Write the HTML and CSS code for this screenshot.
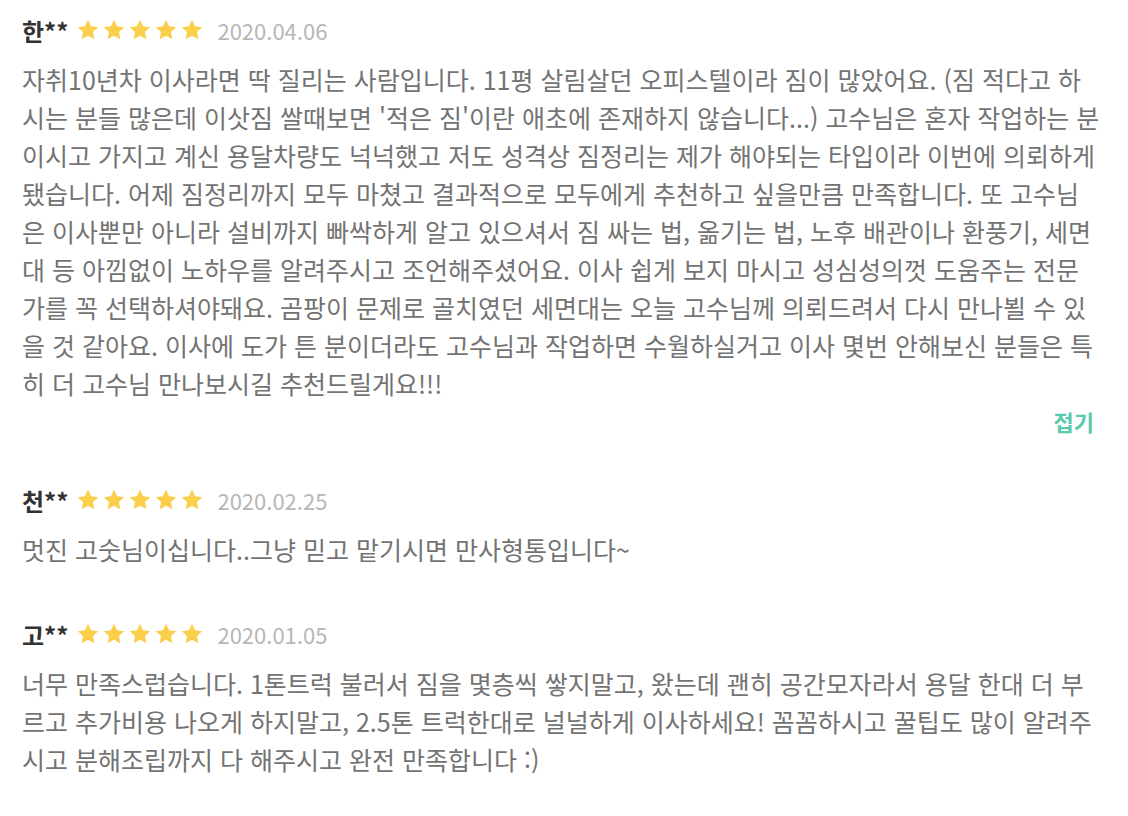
FILE: index.html
```html
<!DOCTYPE html>
<html lang="ko">
<head>
<meta charset="utf-8">
<link rel="stylesheet" href="styles.css">
</head>
<body>
<div class="reviews">
  <div class="review">
    <div class="head">
      <span class="name">한**</span>
      <span class="stars">
        <svg viewBox="0 0 24 24"><path d="M12 1.8l3.1 6.5 7.1.9-5.2 4.9 1.3 7.1L12 17.7l-6.3 3.5 1.3-7.1L1.8 9.2l7.1-.9z"/></svg>
        <svg viewBox="0 0 24 24"><path d="M12 1.8l3.1 6.5 7.1.9-5.2 4.9 1.3 7.1L12 17.7l-6.3 3.5 1.3-7.1L1.8 9.2l7.1-.9z"/></svg>
        <svg viewBox="0 0 24 24"><path d="M12 1.8l3.1 6.5 7.1.9-5.2 4.9 1.3 7.1L12 17.7l-6.3 3.5 1.3-7.1L1.8 9.2l7.1-.9z"/></svg>
        <svg viewBox="0 0 24 24"><path d="M12 1.8l3.1 6.5 7.1.9-5.2 4.9 1.3 7.1L12 17.7l-6.3 3.5 1.3-7.1L1.8 9.2l7.1-.9z"/></svg>
        <svg viewBox="0 0 24 24"><path d="M12 1.8l3.1 6.5 7.1.9-5.2 4.9 1.3 7.1L12 17.7l-6.3 3.5 1.3-7.1L1.8 9.2l7.1-.9z"/></svg>
      </span>
      <span class="date">2020.04.06</span>
    </div>
    <p class="body">자취10년차 이사라면 딱 질리는 사람입니다. 11평 살림살던 오피스텔이라 짐이 많았어요. (짐 적다고 하<br>
시는 분들 많은데 이삿짐 쌀때보면 '적은 짐'이란 애초에 존재하지 않습니다...) 고수님은 혼자 작업하는 분<br>
이시고 가지고 계신 용달차량도 넉넉했고 저도 성격상 짐정리는 제가 해야되는 타입이라 이번에 의뢰하게<br>
됐습니다. 어제 짐정리까지 모두 마쳤고 결과적으로 모두에게 추천하고 싶을만큼 만족합니다. 또 고수님<br>
은 이사뿐만 아니라 설비까지 빠싹하게 알고 있으셔서 짐 싸는 법, 옮기는 법, 노후 배관이나 환풍기, 세면<br>
대 등 아낌없이 노하우를 알려주시고 조언해주셨어요. 이사 쉽게 보지 마시고 성심성의껏 도움주는 전문<br>
가를 꼭 선택하셔야돼요. 곰팡이 문제로 골치였던 세면대는 오늘 고수님께 의뢰드려서 다시 만나뵐 수 있<br>
을 것 같아요. 이사에 도가 튼 분이더라도 고수님과 작업하면 수월하실거고 이사 몇번 안해보신 분들은 특<br>
히 더 고수님 만나보시길 추천드릴게요!!!</p>
    <div class="fold"><span class="fold-btn">접기</span></div>
  </div>
  <div class="review">
    <div class="head">
      <span class="name">천**</span>
      <span class="stars">
        <svg viewBox="0 0 24 24"><path d="M12 1.8l3.1 6.5 7.1.9-5.2 4.9 1.3 7.1L12 17.7l-6.3 3.5 1.3-7.1L1.8 9.2l7.1-.9z"/></svg>
        <svg viewBox="0 0 24 24"><path d="M12 1.8l3.1 6.5 7.1.9-5.2 4.9 1.3 7.1L12 17.7l-6.3 3.5 1.3-7.1L1.8 9.2l7.1-.9z"/></svg>
        <svg viewBox="0 0 24 24"><path d="M12 1.8l3.1 6.5 7.1.9-5.2 4.9 1.3 7.1L12 17.7l-6.3 3.5 1.3-7.1L1.8 9.2l7.1-.9z"/></svg>
        <svg viewBox="0 0 24 24"><path d="M12 1.8l3.1 6.5 7.1.9-5.2 4.9 1.3 7.1L12 17.7l-6.3 3.5 1.3-7.1L1.8 9.2l7.1-.9z"/></svg>
        <svg viewBox="0 0 24 24"><path d="M12 1.8l3.1 6.5 7.1.9-5.2 4.9 1.3 7.1L12 17.7l-6.3 3.5 1.3-7.1L1.8 9.2l7.1-.9z"/></svg>
      </span>
      <span class="date">2020.02.25</span>
    </div>
    <p class="body">멋진 고숫님이십니다..그냥 믿고 맡기시면 만사형통입니다~</p>
  </div>
  <div class="review">
    <div class="head">
      <span class="name">고**</span>
      <span class="stars">
        <svg viewBox="0 0 24 24"><path d="M12 1.8l3.1 6.5 7.1.9-5.2 4.9 1.3 7.1L12 17.7l-6.3 3.5 1.3-7.1L1.8 9.2l7.1-.9z"/></svg>
        <svg viewBox="0 0 24 24"><path d="M12 1.8l3.1 6.5 7.1.9-5.2 4.9 1.3 7.1L12 17.7l-6.3 3.5 1.3-7.1L1.8 9.2l7.1-.9z"/></svg>
        <svg viewBox="0 0 24 24"><path d="M12 1.8l3.1 6.5 7.1.9-5.2 4.9 1.3 7.1L12 17.7l-6.3 3.5 1.3-7.1L1.8 9.2l7.1-.9z"/></svg>
        <svg viewBox="0 0 24 24"><path d="M12 1.8l3.1 6.5 7.1.9-5.2 4.9 1.3 7.1L12 17.7l-6.3 3.5 1.3-7.1L1.8 9.2l7.1-.9z"/></svg>
        <svg viewBox="0 0 24 24"><path d="M12 1.8l3.1 6.5 7.1.9-5.2 4.9 1.3 7.1L12 17.7l-6.3 3.5 1.3-7.1L1.8 9.2l7.1-.9z"/></svg>
      </span>
      <span class="date">2020.01.05</span>
    </div>
    <p class="body">너무 만족스럽습니다. 1톤트럭 불러서 짐을 몇층씩 쌓지말고, 왔는데 괜히 공간모자라서 용달 한대 더 부<br>
르고 추가비용 나오게 하지말고, 2.5톤 트럭한대로 널널하게 이사하세요! 꼼꼼하시고 꿀팁도 많이 알려주<br>
시고 분해조립까지 다 해주시고 완전 만족합니다 :)</p>
  </div>
</div>
</body>
</html>
```

FILE: styles.css
```css
* { box-sizing: border-box; }
html, body { margin: 0; padding: 0; background: #fff; }
body {
  font-family: "Noto Sans CJK KR", "Noto Sans", sans-serif;
  color: #737373;
}
.reviews {
  padding: 12px 20px 0 22px;
  display: flex;
  flex-direction: column;
}
.review { margin-bottom: 48px; }
.head {
  display: flex;
  align-items: center;
  height: 36px;
}
.name {
  font-size: 24px;
  font-weight: 700;
  color: #333;
  margin-right: 8px;
}
.stars { display: flex; gap: 2px; margin-right: 13px; }
.stars svg { width: 24px; height: 24px; fill: #fbcf4c; display: block; }
.date { font-size: 22px; color: #b7b7b7; }
.body {
  margin: 12px 0 0;
  font-size: 25px;
  line-height: 38px;
  color: #737373;
}
.fold {
  display: flex;
  justify-content: flex-end;
  margin: 4px 14px -2px 0;
}
.fold-btn { font-size: 22px; font-weight: 700; color: #59c9ad; line-height: 30px; }
```
